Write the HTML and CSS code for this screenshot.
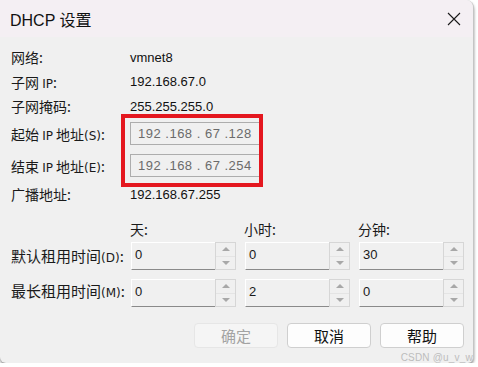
FILE: index.html
```html
<!DOCTYPE html>
<html lang="zh-CN">
<head>
  <meta charset="UTF-8" />
  <title>DHCP 设置</title>
  <link rel="stylesheet" href="styles.css">
</head>
<body>

  <div class="window">
    <div class="titlebar">
      <span class="title">DHCP 设置</span>
      <svg class="close" width="14" height="14" viewBox="0 0 14 14">
        <path d="M1 1 L13 13 M13 1 L1 13" stroke="#1a1a1a" stroke-width="1.1" fill="none"/>
      </svg>
    </div>

    <div class="content">
      <!-- network info -->
      <div class="info">
        <div class="label">网络:</div>
        <div class="value">vmnet8</div>

        <div class="label">子网 <span class="lat">IP</span>:</div>
        <div class="value">192.168.67.0</div>

        <div class="label">子网掩码:</div>
        <div class="value">255.255.255.0</div>

        <div class="label">起始 <span class="lat">IP</span> 地址<span class="lat">(S)</span>:</div>
        <div class="ip-field">192 .168 . 67 .128</div>

        <div class="label">结束 <span class="lat">IP</span> 地址<span class="lat">(E)</span>:</div>
        <div class="ip-field">192 .168 . 67 .254</div>

        <div class="label">广播地址:</div>
        <div class="value">192.168.67.255</div>
      </div>

      <!-- lease times -->
      <div class="lease">
        <div></div>
        <div class="head">天:</div>
        <div class="head">小时:</div>
        <div class="head">分钟:</div>

        <div class="label big">默认租用时间<span class="lat">(D)</span>:</div>
        <div class="spin"><div class="spin-field">0</div><div class="spin-btns"><span class="up"></span><span class="down"></span></div></div>
        <div class="spin"><div class="spin-field">0</div><div class="spin-btns"><span class="up"></span><span class="down"></span></div></div>
        <div class="spin"><div class="spin-field">30</div><div class="spin-btns"><span class="up"></span><span class="down"></span></div></div>

        <div class="label big low">最长租用时间<span class="lat">(M)</span>:</div>
        <div class="spin low"><div class="spin-field">0</div><div class="spin-btns"><span class="up"></span><span class="down"></span></div></div>
        <div class="spin low"><div class="spin-field">2</div><div class="spin-btns"><span class="up"></span><span class="down"></span></div></div>
        <div class="spin low"><div class="spin-field">0</div><div class="spin-btns"><span class="up"></span><span class="down"></span></div></div>
      </div>

      <div class="buttons">
        <button class="btn" disabled>确定</button>
        <button class="btn">取消</button>
        <button class="btn">帮助</button>
      </div>
    </div>

    <!-- annotation box -->
    <div class="highlight"></div>
    <div class="watermark">CSDN @u_v_w</div>
  </div>

</body>
</html>
```

FILE: styles.css
```css
* {
  box-sizing: border-box;
}

body {
  margin: 0;
  background: #ffffff;
  font-family: "Liberation Sans", "Noto Sans CJK SC", sans-serif;
  color: #1a1a1a;
}

.window {
  position: relative;
  width: 474px;
  height: 363px;
  background: #f0f0f0;
  border-right: 1px solid #c4c4c4;
  border-radius: 0 8px 6px 6px;
  box-shadow: 0 2px 3px rgba(0, 0, 0, 0.45);
  overflow: hidden;
}

.titlebar {
  height: 37px;
  background: #f4eff3;
  display: flex;
  align-items: center;
  justify-content: space-between;
  padding: 0 12px 0 10px;
}

.title {
  font-size: 16px;
  color: #111;
}

.content {
  padding: 8px 0 0 11px;
}

.info {
  display: grid;
  grid-template-columns: 119px 1fr;
  grid-template-rows: 24px 25px 24px 31px 33px 24px;
  align-items: center;
}

.label {
  font-family: "Noto Sans CJK SC", sans-serif;
  font-size: 14px;
  color: #1a1a1a;
  white-space: nowrap;
}

.label .lat {
  font-family: "DejaVu Sans", sans-serif;
  font-size: 12px;
}

.value {
  font-size: 13px;
  color: #111;
}

.ip-field {
  width: 131px;
  height: 23px;
  border: 1px solid #adadad;
  background: #f0f0f0;
  color: #6b6b6b;
  font-size: 13px;
  letter-spacing: 0.5px;
  line-height: 21px;
  padding-left: 7px;
  white-space: pre;
}

.lease {
  display: grid;
  grid-template-columns: 111px 105px 105px 105px;
  grid-template-rows: 22px 28px 37px;
  column-gap: 9px;
  margin-top: 14px;
}

.head {
  font-family: "Noto Sans CJK SC", sans-serif;
  font-size: 14px;
  line-height: 18px;
  margin-left: -1px;
}

.lease .label {
  font-size: 15px;
  line-height: 28px;
}

.low {
  align-self: end;
}

.spin {
  display: flex;
  height: 28px;
}

.spin-field {
  flex: 1;
  border-top: 1px solid #ffffff;
  border-left: 1px solid #ffffff;
  border-bottom: 1px solid #8a8a8a;
  font-size: 13px;
  line-height: 24px;
  padding-left: 3px;
}

.spin-btns {
  width: 21px;
  border: 1px solid #d6d6d6;
  display: flex;
  flex-direction: column;
}

.spin-btns span {
  flex: 1;
  display: flex;
  align-items: center;
  justify-content: center;
}

.spin-btns .up {
  border-bottom: 1px solid #e4e4e4;
}

.spin-btns .up::after {
  content: "";
  border-left: 4px solid transparent;
  border-right: 4px solid transparent;
  border-bottom: 4px solid #a8a8a8;
}

.spin-btns .down::after {
  content: "";
  border-left: 4px solid transparent;
  border-right: 4px solid transparent;
  border-top: 4px solid #a8a8a8;
}

.buttons {
  display: flex;
  justify-content: flex-end;
  gap: 9px;
  margin-top: 16px;
  padding-right: 9px;
}

.btn {
  width: 84px;
  height: 25px;
  background: #fdfdfd;
  border: 1px solid #cfcfcf;
  border-radius: 4px;
  font-family: "Noto Sans CJK SC", sans-serif;
  font-size: 15px;
  color: #111;
  padding: 0;
}

.btn:disabled {
  background: #f5f5f5;
  border-color: #e6e6e6;
  color: #a3a3a3;
}

.highlight {
  position: absolute;
  left: 121px;
  top: 114px;
  width: 142px;
  height: 73px;
  border: 4px solid #e4171f;
}

.watermark {
  position: absolute;
  right: 0;
  bottom: 0;
  font-size: 10px;
  color: #bdbdbd;
  letter-spacing: 0.2px;
}
```
